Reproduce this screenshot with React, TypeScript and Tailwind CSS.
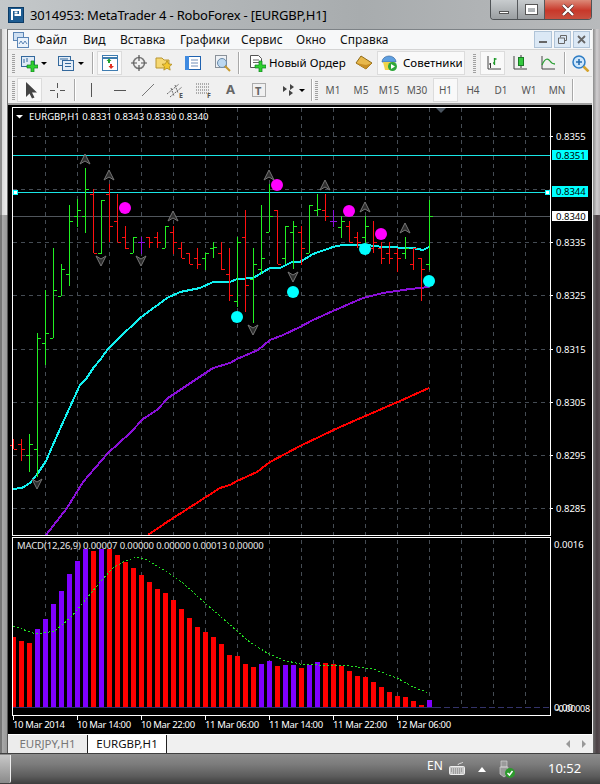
import React from "react";

const FONT = "'Noto Sans', 'Liberation Sans', sans-serif";

// [x, high, low, open, close, colour]
type Bar = [number, number, number, number, number, string];
const G = "#22f022";
const R = "#ff1010";
const P = "#8a10e0";
const bars: Bar[] = [
  [13, 439, 449, 445, 449, R], [21, 439, 461, 444, 449, R], [29, 434, 472, 455, 444, G], [37, 333, 477, 449, 338, G],
  [45, 290, 365, 343, 333, G], [53, 248, 338, 338, 290, G], [61, 264, 296, 296, 269, G], [69, 205, 286, 274, 221, G],
  [77, 199, 227, 216, 210, G], [85, 168, 233, 216, 189, G], [93, 189, 253, 194, 253, R], [101, 200, 254, 253, 200, G],
  [109, 184, 242, 194, 226, R], [117, 194, 242, 221, 242, R], [125, 226, 249, 237, 248, R], [133, 237, 253, 253, 237, G],
  [141, 237, 254, 242, 242, P], [149, 237, 248, 237, 242, R], [157, 232, 248, 237, 242, R], [165, 226, 248, 248, 226, G],
  [173, 226, 254, 232, 242, R], [181, 242, 258, 248, 258, R], [189, 253, 264, 253, 264, R], [197, 248, 269, 258, 264, R],
  [205, 253, 270, 258, 253, G], [213, 242, 258, 248, 247, G], [221, 242, 270, 253, 269, R], [229, 248, 301, 274, 295, R],
  [237, 237, 307, 301, 242, G], [245, 210, 312, 237, 285, R], [253, 248, 323, 279, 264, G], [261, 205, 274, 269, 258, G],
  [269, 184, 232, 232, 216, G], [277, 210, 264, 210, 264, R], [285, 226, 264, 258, 226, G], [293, 221, 269, 232, 226, G],
  [301, 226, 265, 232, 248, R], [309, 205, 253, 253, 205, G], [317, 194, 216, 210, 209, G], [325, 194, 221, 210, 216, R],
  [333, 210, 227, 221, 221, P], [341, 216, 238, 227, 221, G], [349, 221, 242, 226, 242, R], [357, 232, 248, 237, 242, R],
  [365, 216, 243, 237, 226, G], [373, 221, 253, 248, 242, R], [381, 242, 264, 248, 258, R], [389, 242, 264, 253, 258, R],
  [397, 248, 272, 253, 258, R], [405, 237, 259, 253, 248, G], [413, 248, 270, 264, 248, R], [421, 258, 301, 258, 269, R],
  [429, 200, 270, 264, 216, G],
];

const M = "#ff0000";
const V = "#7f00ff";
const macd: [number, number, string][] = [
  [13, 637, M], [21, 641, M], [29, 643, M], [37, 629, V], [45, 619, V], [53, 604, V], [61, 591, V], [69, 574, V], [77, 561, V],
  [85, 549, V], [93, 551, M], [101, 549, V], [109, 549, M], [117, 555, M], [125, 562, M], [133, 568, M], [141, 575, M], [149, 582, M],
  [157, 589, M], [165, 593, M], [173, 600, M], [181, 609, M], [189, 618, M], [197, 627, M], [205, 632, M], [213, 637, M], [221, 644, M],
  [229, 655, M], [237, 656, M], [245, 664, M], [253, 667, M], [261, 664, V], [269, 661, V], [277, 666, M], [285, 665, V], [293, 665, V],
  [301, 668, M], [309, 665, V], [317, 662, V], [325, 663, M], [333, 664, M], [341, 666, M], [349, 671, M], [357, 676, M], [365, 677, M],
  [373, 682, M], [381, 687, M], [389, 692, M], [397, 696, M], [405, 697, M], [413, 701, M], [421, 705, M], [429, 700, V],
];

const cyanLine = "13,489 22,488 30,483 38,473 46,461 52,447 60,429 70,407 80,385 86,379 94,367 100,360 108,349 122,335 135,323 140,318 167,298 180,292 200,288 213,282 230,282 237,279 253,278 270,268 280,268 292,262 300,262 313,254 333,247 342,245 367,245 383,247 413,248 423,250 429,247";
const purpleLine = "46,535 67,508 83,482 108,453 130,433 143,419 157,410 168,398 183,388 213,368 230,363 237,359 258,350 270,340 283,335 300,327 313,320 333,311 363,298 383,293 410,289 429,287";
const redLine = "148,535 167,522 220,488 230,485 237,481 257,472 270,462 300,446 340,427 370,414 400,401 429,388";
const signalLine = "13,626 33,633 43,633 55,631 70,618 83,603 100,582 113,568 123,562 137,557 147,560 167,572 183,583 207,605 227,622 247,640 267,653 283,660 300,664 317,665 350,666 373,669 397,678 413,687 429,693";

const gridX = [45, 77, 109, 141, 173, 205, 237, 269, 301, 333, 365, 397, 429, 461, 493, 525];
const gridY = [136, 189, 242, 295, 349, 402, 455, 508];
const axis: [string, number][] = [["0.8355", 136], ["0.8335", 242], ["0.8325", 295], ["0.8315", 349], ["0.8305", 402], ["0.8295", 455], ["0.8285", 508]];
const times: [string, number][] = [["10 Mar 2014", 13], ["10 Mar 14:00", 77], ["10 Mar 22:00", 141], ["11 Mar 06:00", 205], ["11 Mar 14:00", 269], ["11 Mar 22:00", 333], ["12 Mar 06:00", 397]];
const ups = [[85, 159], [109, 175], [173, 216], [269, 175], [325, 185], [365, 207], [405, 228]];
const downs = [[101, 261], [141, 261], [253, 330], [293, 277], [37, 484]];

function Chart() {
  return (
    <svg width={584} height={629} viewBox="8 105 584 629" className="block shrink-0" style={{ fontFamily: FONT }}>
      <rect x={8} y={105} width={584} height={629} fill="#000" />
      <g shapeRendering="crispEdges">
        {/* grid */}
        {gridX.map((x) => (
          <g key={x}>
            <line x1={x + 0.5} x2={x + 0.5} y1={108} y2={535} stroke="#454c54" strokeDasharray="4 4" />
            <line x1={x + 0.5} x2={x + 0.5} y1={540} y2={708} stroke="#454c54" strokeDasharray="4 4" />
          </g>
        ))}
        {gridY.map((y) => (
          <line key={y} x1={13} x2={550} y1={y + 0.5} y2={y + 0.5} stroke="#454c54" strokeDasharray="4 4" />
        ))}
        {/* levels */}
        <line x1={13} x2={550} y1={155.5} y2={155.5} stroke="#19e6e6" />
        <line x1={13} x2={550} y1={192.5} y2={192.5} stroke="#19e6e6" />
        <line x1={13} x2={550} y1={216.5} y2={216.5} stroke="#50565c" />
        {/* moving averages */}
        <polyline points={redLine} fill="none" stroke="#ff0000" strokeWidth={2} />
        <polyline points={purpleLine} fill="none" stroke="#8a10d8" strokeWidth={2} />
        <polyline points={cyanLine} fill="none" stroke="#12f0f0" strokeWidth={2} />
        {/* price bars */}
        {bars.map(([x, h, l, o, c, col]) => (
          <g key={x} stroke={col} fill="none">
            <line x1={x + 0.5} x2={x + 0.5} y1={h} y2={l} />
            <line x1={x - 3} x2={x} y1={o + 0.5} y2={o + 0.5} />
            <line x1={x + 1} x2={x + 4} y1={c + 0.5} y2={c + 0.5} />
          </g>
        ))}
      </g>
      <path d="M436 108h10l-5 5z" fill="#4a5560" />
      {/* fractals */}
      {ups.map(([x, y]) => (
        <path key={x} d={`M${x} ${y - 5}l5 10l-5 -3l-5 3z`} fill="#2e2e2e" stroke="#777" />
      ))}
      {downs.map(([x, y]) => (
        <path key={x} d={`M${x} ${y + 5}l5 -10l-5 3l-5 -3z`} fill="#2e2e2e" stroke="#777" />
      ))}
      {[[125, 208], [277, 185], [349, 211], [381, 234]].map(([x, y]) => (
        <circle key={x} cx={x} cy={y} r={6} fill="#ff00ff" />
      ))}
      {[[237, 317], [293, 292], [365, 249], [429, 281]].map(([x, y]) => (
        <circle key={x} cx={x} cy={y} r={6} fill="#00ffff" />
      ))}
      <g shapeRendering="crispEdges">
        <rect x={13.5} y={190.5} width={4} height={4} fill="#fff" stroke="#00ffff" />
        <rect x={545.5} y={190.5} width={4} height={4} fill="#fff" stroke="#00ffff" />
        {/* frames */}
        <rect x={12.5} y={107.5} width={538} height={428} fill="none" stroke="#fff" />
        <rect x={12.5} y={537.5} width={538} height={178} fill="none" stroke="#fff" />
      </g>
      <path d="M16 115h7l-3.500 3.500z" fill="#fff" />
      <text x={29} y={120} fill="#fff" fontSize={9.5}>EURGBP,H1  0.8331 0.8343 0.8330 0.8340</text>
      {/* right axis */}
      {axis.map(([t, y]) => (
        <g key={t}>
          <line x1={550} x2={553} y1={y + 0.5} y2={y + 0.5} stroke="#fff" />
          <text x={556} y={y + 3.5} fill="#fff" fontSize={9.5}>{t}</text>
        </g>
      ))}
      <rect x={552} y={150} width={36} height={10} fill="#00ffff" />
      <text x={556} y={159} fill="#000" fontSize={9.5}>0.8351</text>
      <rect x={552} y={186} width={36} height={11} fill="#00ffff" />
      <text x={556} y={195} fill="#000" fontSize={9.5}>0.8344</text>
      <rect x={552} y={211} width={36} height={10} fill="#fff" />
      <text x={556} y={220} fill="#000" fontSize={9.5}>0.8340</text>
      {/* macd */}
      <g shapeRendering="crispEdges">
        {macd.map(([x, t, col]) => (
          <rect key={x} x={x === 13 ? 13 : x - 2} y={t} width={x === 13 ? 3 : 5} height={707 - t} fill={col} />
        ))}
        <line x1={13} x2={435} y1={707.5} y2={707.5} stroke="#2c2c70" />
        <line x1={435} x2={550} y1={707.5} y2={707.5} stroke="#33336a" strokeDasharray="6 3" />
        <polyline points={signalLine} fill="none" stroke="#22e022" strokeDasharray="2 2" />
      </g>
      <text x={17} y={549} fill="#e8e8e8" fontSize={9.5} letterSpacing={-0.13}>MACD(12,26,9) 0.00007 0.00000 0.00000 0.00013 0.00000</text>
      <text x={554} y={548} fill="#fff" fontSize={9.5}>0.0016</text>
      <text x={554} y={711} fill="#fff" fontSize={9.5}>0.00</text>
      <text x={556} y={712} fill="#fff" fontSize={9} letterSpacing={-0.3}>-0.00008</text>
      {/* time axis */}
      {times.map(([t, x]) => (
        <g key={t}>
          <line x1={x + 0.5} x2={x + 0.5} y1={716} y2={720} stroke="#fff" />
          <text x={x} y={728} fill="#fff" fontSize={9.5} letterSpacing={-0.35}>{t}</text>
        </g>
      ))}
    </svg>
  );
}

function Ico({ children, w = 18, className = "" }: { children: React.ReactNode; w?: number; className?: string }) {
  return (
    <svg width={w} height={18} viewBox={`0 0 ${w} 18`} className={"block shrink-0 " + className}>
      {children}
    </svg>
  );
}

const Plus = ({ x = 7, y = 7 }: { x?: number; y?: number }) => (
  <path transform={`translate(${x} ${y})`} d="M4 0h3v4h4v3h-4v4h-3v-4h-4v-3h4z" fill="#2fd02f" stroke="#0f7f1f" strokeWidth={0.7} />
);

const Drop = ({ className = "" }: { className?: string }) => (
  <div className={"w-0 h-0 border-x-[3px] border-x-transparent border-t-[3px] border-t-black shrink-0 " + className} />
);
const Sep = ({ className = "" }: { className?: string }) => <div className={"w-px h-[22px] bg-[#a8a8a8] border-r border-white box-content shrink-0 " + className} />;
const Grip = ({ className = "" }: { className?: string }) => (
  <div className={"w-[3px] h-[20px] shrink-0 bg-[repeating-linear-gradient(0deg,#a0a0a0_0,#a0a0a0_1px,transparent_1px,transparent_2px)] " + className} />
);
const Active = ({ children, className = "" }: { children: React.ReactNode; className?: string }) => (
  <div className={"h-[24px] flex items-center justify-center bg-[#f9f9f9] border border-[#dcdcdc] shrink-0 " + className}>{children}</div>
);

function Toolbar1() {
  return (
    <div className="h-[27px] flex items-center bg-[#f0f0f0] border-b border-[#d9d9d9] text-[11.500px] text-black">
      <Grip className="ml-[4px]" />
      <Ico className="ml-[5px]">
        <rect x={1.500} y={2.500} width={13} height={10} fill="#dfeaf6" stroke="#33689c" />
        <path d="M4 5v4M7 4v4" stroke="#33689c" />
        <Plus />
      </Ico>
      <Drop className="ml-[3px]" />
      <Ico className="ml-[10px]">
        <rect x={1.500} y={2.500} width={12} height={9} fill="#e4edf7" stroke="#33689c" />
        <rect x={5.500} y={6.500} width={11} height={10} fill="#e4edf7" stroke="#33689c" />
        <path d="M3 5h8M8 9.500h6M8 12.500h6" stroke="#33689c" />
      </Ico>
      <Drop className="ml-[3px]" />
      <Sep className="ml-[8px]" />
      <Active className="w-[25px] ml-[3px]">
        <Ico>
          <rect x={1.500} y={1.500} width={15} height={15} fill="#fff" stroke="#3f7cb0" />
          <path d="M1.500 4h15" stroke="#3f7cb0" strokeWidth={2} />
          <path d="M7 9V7H5.500L8 4.500 10.500 7H9v2z" fill="#22a030" />
          <path d="M9 10v2H7.500L10 15l3-3h-2v-2z" fill="#e03020" />
        </Ico>
      </Active>
      <Ico className="ml-[8px]">
        <circle cx={9} cy={9} r={5.500} fill="none" stroke="#7a7a7a" strokeWidth={1.600} />
        <path d="M9 1v6M9 11v6M1 9h6M11 9h6" stroke="#555" strokeWidth={1.200} />
      </Ico>
      <Ico className="ml-[7px]">
        <path d="M1 4h6l2 2h5v8H1z" fill="#f6d873" stroke="#b89530" />
        <path d="M12 6.500l1.600 3.400 3.400.4-2.500 2.400.7 3.400-3.200-1.800-3.200 1.800.7-3.400L7 10.300l3.400-.4z" fill="#f2c730" stroke="#a88416" strokeWidth={0.7} />
      </Ico>
      <Ico className="ml-[11px]">
        <rect x={1.500} y={2.500} width={15} height={13} fill="#fff" stroke="#1f62b0" />
        <rect x={1} y={2} width={4} height={14} fill="#3f8ae0" />
        <path d="M7 6h7M7 9h7M7 12h7" stroke="#708fb8" />
      </Ico>
      <Ico className="ml-[11px]">
        <rect x={2.500} y={1.500} width={11} height={12} fill="#eef1f5" stroke="#8a9199" />
        <circle cx={9} cy={9} r={4.500} fill="#bcd8f0" stroke="#6a8aa8" />
        <path d="M12 12l5 5" stroke="#c89a30" strokeWidth={2} />
      </Ico>
      <Sep className="ml-[7px]" />
      <Ico className="ml-[8px]">
        <path d="M2.500 1.500h8l3 3v9h-11z" fill="#fff" stroke="#555" />
        <path d="M5 6h6M5 8.500h6" stroke="#666" />
        <Plus />
      </Ico>
      <span className="ml-[3px] w-[78px] shrink-0 whitespace-nowrap" style={{ fontFamily: FONT }}>Новый Ордер</span>
      <Ico className="ml-[8px]">
        <path d="M1 9l5-7 11 7-6 6z" fill="#e7b84c" stroke="#8f6a18" />
        <path d="M1 9l10 2 6-2-6 6z" fill="#c88f25" />
      </Ico>
      <Active className="w-[88px] ml-[4px] justify-start">
        <Ico className="ml-[2px]">
          <path d="M2 8a7 6 0 0 1 14 0z" fill="#5f9fe0" stroke="#3768a0" strokeWidth={0.7} />
          <path d="M3 8h12l-1 8H5z" fill="#f0d34a" />
          <circle cx={12.500} cy={12.500} r={4.500} fill="#2ea63a" />
          <path d="M11 10l4 2.500-4 2.500z" fill="#fff" />
        </Ico>
        <span className="ml-[5px] whitespace-nowrap" style={{ fontFamily: FONT }}>Советники</span>
      </Active>
      <Grip className="ml-[8px]" />
      <Active className="w-[25px] ml-[4px]">
        <Ico>
          <path d="M4 2v13h13" fill="none" stroke="#444" />
          <path d="M6.500 9v5M5 10h2" stroke="#333" />
          <path d="M10.500 4v7M9 9h1.500M10.500 5h2" stroke="#1f9a2a" strokeWidth={1.300} />
        </Ico>
      </Active>
      <Ico className="ml-[6px]">
        <path d="M3 2v13h13" fill="none" stroke="#444" />
        <path d="M10 1v13" stroke="#333" />
        <rect x={7.500} y={3.500} width={5} height={8} fill="#35c83f" stroke="#1b7a25" />
      </Ico>
      <Ico className="ml-[10px]">
        <path d="M3 2v13h13" fill="none" stroke="#444" />
        <path d="M3 11c3-7 6-7 8-4s3 3 5 3" fill="none" stroke="#2c9f35" strokeWidth={1.300} />
      </Ico>
      <Sep className="ml-[7px]" />
      <Ico className="ml-[5px]" w={20}>
        <circle cx={8} cy={8} r={6} fill="#cfe7fb" stroke="#2d7cc4" strokeWidth={1.500} />
        <path d="M5 8h6M8 5v6" stroke="#2a6fb0" strokeWidth={1.600} />
        <path d="M12.500 12.500l5 5" stroke="#d5a32d" strokeWidth={2.500} />
      </Ico>
    </div>
  );
}

const periods = ["M1", "M5", "M15", "M30", "H1", "H4", "D1", "W1", "MN"];

function Toolbar2() {
  return (
    <div className="h-[28px] flex items-center bg-[#f0f0f0] border-b-2 border-[#a0a0a0] text-[#555]" style={{ fontFamily: FONT }}>
      <Grip className="ml-[4px]" />
      <Active className="w-[25px] ml-[2px]">
        <Ico>
          <path d="M5 1v15l3.500-3.500 2.500 5 2.500-1-2.500-5h5z" fill="#444" />
        </Ico>
      </Active>
      <Ico className="ml-[6px]">
        <path d="M9.500 2v5M9.500 12v5M2 9.500h5M12 9.500h5" stroke="#555" />
      </Ico>
      <Sep className="ml-[8px]" />
      <Ico className="ml-[6px]">
        <path d="M9.500 2v14" stroke="#555" />
      </Ico>
      <Ico className="ml-[11px]">
        <path d="M3 9.500h12" stroke="#555" />
      </Ico>
      <Ico className="ml-[10px]">
        <path d="M3 15L15 3" stroke="#777" />
      </Ico>
      <Ico className="ml-[9px]" w={20}>
        <path d="M1 13L13 3M4 16L16 6M5 7l3 8M9 4l3 8" stroke="#666" strokeDasharray="2 1" fill="none" />
        <text x={13} y={17} fontSize={7} fontWeight={700} fill="#555">E</text>
      </Ico>
      <Ico className="ml-[9px]" w={20}>
        <path d="M1 3h14M1 6h14M1 9h14M1 12h14" stroke="#666" strokeDasharray="1 1" />
        <text x={12} y={17} fontSize={7} fontWeight={700} fill="#555">F</text>
      </Ico>
      <span className="ml-[11px] w-[10px] text-[13px] font-bold text-[#666]">A</span>
      <Ico className="ml-[14px]">
        <rect x={2.500} y={2.500} width={13} height={13} fill="none" stroke="#666" strokeDasharray="1 1" />
        <text x={5} y={14} fontSize={11} fontWeight={700} fill="#666">T</text>
      </Ico>
      <Ico className="ml-[12px]">
        <path d="M3 5l4 3-4 3zM9 9l4 3-4 3z" fill="#444" />
        <path d="M10 3l4 3-4 3z" fill="#444" />
      </Ico>
      <Drop className="ml-px" />
      <Sep className="ml-[6px]" />
      <Grip className="ml-[2px]" />
      <div className="flex items-center ml-px">
        {periods.map((p) =>
          p === "H1" ? (
            <Active key={p} className="w-[25px] ml-[2px] mr-px text-[10px]">{p}</Active>
          ) : (
            <span key={p} className="w-[28px] text-center text-[10px] shrink-0">{p}</span>
          )
        )}
      </div>
      <Sep className="ml-px" />
    </div>
  );
}

export default function App() {
  return (
    <div className="w-[600px] h-[784px] flex flex-col overflow-hidden bg-[#a9aeb1]" style={{ fontFamily: FONT }}>
      {/* title bar */}
      <div className="h-[29px] shrink-0 flex items-start bg-[linear-gradient(90deg,#c4c8ca_0%,#b4b8ba_30%,#a8acae_60%,#b8babc_100%)]">
        <svg width={16} height={16} viewBox="0 0 16 16" className="ml-[8px] mt-[7px] shrink-0">
          <rect x={0.5} y={0.5} width={15} height={15} fill="#1d5c92" stroke="#0d3c66" />
          <path d="M4 13V3h8v5H6.500M6.500 5.500h3" fill="none" stroke="#fff" strokeWidth={2} />
        </svg>
        <span className="ml-[6px] mt-[5px] text-[13px] leading-[20px] text-black whitespace-nowrap tracking-[-0.2px]">3014953: MetaTrader 4 - RoboForex - [EURGBP,H1]</span>
        <div className="ml-auto mr-[8px] flex h-[20px] shrink-0 border border-t-0 border-[#4f5356] rounded-b-[4px] overflow-hidden">
          <div className="w-[27px] flex items-center justify-center bg-[linear-gradient(180deg,#c8ccce,#9a9ea1)] border-r border-[#55585b]">
            <div className="w-[10px] h-[3px] mt-[6px] bg-white border border-[#555]" />
          </div>
          <div className="w-[27px] flex items-center justify-center bg-[linear-gradient(180deg,#c8ccce,#9a9ea1)] border-r border-[#55585b]">
            <div className="w-[11px] h-[9px] border-2 border-t-[3px] border-white outline outline-1 outline-[#555]" />
          </div>
          <div className="w-[46px] flex items-center justify-center bg-[linear-gradient(180deg,#dc8a78_0%,#c8382a_55%,#c85040_100%)]">
            <svg width={14} height={12} viewBox="0 0 14 12">
              <path d="M2 1l10 10M12 1L2 11" stroke="#4a2a2a" strokeWidth={3.400} fill="none" />
              <path d="M2 1l10 10M12 1L2 11" stroke="#fff" strokeWidth={2.400} fill="none" />
            </svg>
          </div>
        </div>
      </div>

      {/* window body */}
      <div className="flex-1 flex min-h-0">
        <div className="w-[8px] shrink-0 flex flex-col">
          <div className="h-[186px] bg-[linear-gradient(90deg,#8f8f8f_0%,#8f8f8f_25%,#dcdcdc_30%,#ececec_85%,#707070_88%)]" />
          <div className="flex-1 bg-[linear-gradient(90deg,#777_0%,#777_25%,#a8a8a8_30%,#9a9a9a_85%,#555_88%)]" />
        </div>
        <div className="w-[584px] flex flex-col border-t border-[#7d8286]">
          <div className="h-[20px] shrink-0 flex items-center bg-[#f7f8f9] border-b border-[#d4d4d4] text-[12px] text-[#111]">
            <svg width={16} height={16} viewBox="0 0 16 16" className="ml-[5px] shrink-0">
              <rect x={0.5} y={0.5} width={10} height={8} fill="#cfe0f2" stroke="#5b85b5" />
              <rect x={4.500} y={5.500} width={11} height={10} fill="#eaf2fb" stroke="#5b85b5" />
              <path d="M6 12l2-3 2 3 2-3 2 3" stroke="#5b85b5" fill="none" />
            </svg>
            <div className="ml-[7px] flex">
              <span className="w-[47px]">Файл</span>
              <span className="w-[37px]">Вид</span>
              <span className="w-[60px]">Вставка</span>
              <span className="w-[61px]">Графики</span>
              <span className="w-[55px]">Сервис</span>
              <span className="w-[44px]">Окно</span>
              <span>Справка</span>
            </div>
            <div className="ml-auto mr-[2px] flex gap-[2px]">
              <div className="w-[18px] h-[17px] bg-[#dbe8f5] border border-[#b0c4d8] flex items-end justify-center pb-[4px]"><div className="w-[8px] h-[2px] bg-[#666]" /></div>
              <div className="w-[17px] h-[17px] bg-[#dbe8f5] border border-[#b0c4d8] flex items-center justify-center">
                <svg width={9} height={9} viewBox="0 0 9 9"><path d="M2.500 2.500v-2h6v5h-2M.5 3h6v5.500h-6z" stroke="#666" fill="none" /></svg>
              </div>
              <div className="w-[17px] h-[17px] bg-[#dbe8f5] border border-[#b0c4d8] flex items-center justify-center">
                <svg width={9} height={9} viewBox="0 0 9 9"><path d="M1 1l7 7M8 1L1 8" stroke="#666" strokeWidth={1.800} /></svg>
              </div>
            </div>
          </div>
          <Toolbar1 />
          <Toolbar2 />
          <Chart />
          <div className="h-[19px] shrink-0 flex items-stretch bg-[#f0f0f0] border-t border-white text-[11.500px] leading-[18px]">
            <div className="w-[80px] text-center text-[#777] border-r border-[#222] bg-[#ececec]">EURJPY,H1</div>
            <div className="w-[79px] text-center text-[#111] border-r border-[#222] bg-white">EURGBP,H1</div>
            <div className="ml-auto mr-[5px] flex items-center gap-[12px]">
              <div className="w-0 h-0 border-y-[4px] border-y-transparent border-r-[4px] border-r-[#999]" />
              <div className="w-0 h-0 border-y-[4px] border-y-transparent border-l-[4px] border-l-[#999] mr-px" />
            </div>
          </div>
        </div>
        <div className="w-[8px] shrink-0 flex flex-col">
          <div className="h-[186px] bg-[linear-gradient(90deg,#f0f0f0_0%,#f0f0f0_12%,#8f8f8f_15%,#cfcdcf_60%,#b8b4b6_100%)]" />
          <div className="flex-1 bg-[linear-gradient(90deg,#f0f0f0_0%,#f0f0f0_12%,#6a6a6a_15%,#4a4044_60%,#5a5054_100%)]" />
        </div>
      </div>

      {/* taskbar */}
      <div className="h-[31px] shrink-0 flex items-center text-white bg-[linear-gradient(180deg,#8c8c8c_0%,#7b7b7b_35%,#5b5b5b_75%,#3d3d3d_100%)] border-t border-[#404040]">
        <div className="w-[11px] h-[28px] bg-[linear-gradient(180deg,#c8c8c8,#8a8a8a)] border-r border-[#eee] rounded-br-[2px] shrink-0" />
        <span className="ml-[416px] w-[22px] text-[12px] mb-[6px]">EN</span>
        <svg width={16} height={14} viewBox="0 0 16 14" className="shrink-0">
          <path d="M9 3c0-2 3-1 5-3" stroke="#ddd" fill="none" />
          <rect x={0.5} y={4.500} width={15} height={8} rx={1} fill="#c8c8c8" stroke="#eee" />
          <path d="M2 7h12M2 9h12M4 11h8" stroke="#777" strokeDasharray="1 1" />
        </svg>
        <div className="ml-[13px] w-0 h-0 border-x-[4px] border-x-transparent border-b-[5px] border-b-white shrink-0" />
        <svg width={18} height={18} viewBox="0 0 18 18" className="ml-[12px] shrink-0">
          <path d="M3 1h6v6H3zM2 7h8v7l-4 3-4-3z" fill="#9a9a9a" stroke="#ddd" strokeWidth={0.6} />
          <circle cx={12} cy={13} r={5} fill="#2d9a2d" />
          <path d="M9.500 13l2 2 3-4" stroke="#fff" strokeWidth={1.500} fill="none" />
        </svg>
        <span className="ml-[32px] text-[13px]">10:52</span>
      </div>
    </div>
  );
}
